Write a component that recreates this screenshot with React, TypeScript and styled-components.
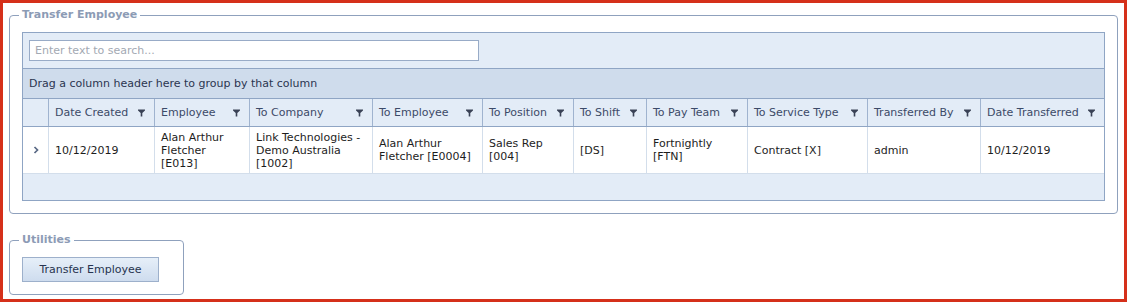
import React from 'react';
import styled, { createGlobalStyle } from 'styled-components';

const GlobalStyle = createGlobalStyle`
  html, body {
    margin: 0;
    padding: 0;
    background: #ffffff;
  }
  body {
    font-family: "DejaVu Sans", Verdana, sans-serif;
    font-size: 11px;
  }
`;

const Frame = styled.div`
  box-sizing: border-box;
  width: 1127px;
  height: 302px;
  border: 3px solid #d5301a;
  padding: 5px 6px 0 6px;
  background: #fff;
`;

const Group = styled.fieldset<{ $width?: string }>`
  box-sizing: border-box;
  width: ${(p) => p.$width || '100%'};
  margin: 0;
  padding: 10px 12px 12px 12px;
  border: 1px solid #8fa1bd;
  border-radius: 4px;
  & + & {
    margin-top: 19px;
  }
`;

const Caption = styled.legend`
  padding: 0 3px;
  margin-left: -3px;
  line-height: 14px;
  font-weight: bold;
  font-size: 11px;
  color: #8c9bb5;
`;

const Grid = styled.div`
  border: 1px solid #8fa5c4;
  background: #fff;
`;

const SearchPanel = styled.div`
  height: 35px;
  box-sizing: border-box;
  padding: 7px 6px;
  background: #e3ecf7;
`;

const SearchInput = styled.input`
  box-sizing: border-box;
  display: block;
  width: 450px;
  height: 21px;
  margin: 0;
  padding: 0 5px;
  border: 1px solid #98abc7;
  background: #fff;
  font: inherit;
  color: #222;
  outline: none;
  &::placeholder {
    color: #a3a9b3;
  }
`;

const GroupPanel = styled.div`
  height: 30px;
  box-sizing: border-box;
  border-top: 1px solid #8fa5c4;
  padding: 0 6px;
  display: flex;
  align-items: center;
  background: #cfdcec;
  color: #2b3550;
`;

const columns = '25px 106px 95px 123px 110px 91px 73px 101px 120px 113px 1fr';

const Row = styled.div<{ $head?: boolean }>`
  display: grid;
  grid-template-columns: ${columns};
  height: ${(p) => (p.$head ? '28px' : '48px')};
  box-sizing: border-box;
  border-top: 1px solid #8fa5c4;
  background: ${(p) => (p.$head ? '#e3ecf7' : '#fff')};
`;

const HeadCell = styled.div`
  display: flex;
  align-items: center;
  justify-content: space-between;
  box-sizing: border-box;
  padding: 0 9px 0 6px;
  border-left: 1px solid #9fb3cf;
  color: #3c4a68;
  white-space: nowrap;
  &:first-child {
    border-left: none;
  }
`;

const Cell = styled.div`
  display: flex;
  align-items: center;
  box-sizing: border-box;
  padding: 0 6px;
  border-left: 1px solid #d3deeb;
  border-bottom: 1px solid #d3deeb;
  color: #1d1d1d;
  line-height: 13px;
  &:first-child {
    border-left: none;
    justify-content: center;
  }
`;

const Footer = styled.div`
  height: 26px;
  background: #e3ecf7;
`;

const Button = styled.button`
  box-sizing: border-box;
  width: 137px;
  height: 25px;
  margin: 0;
  padding: 0;
  border: 1px solid #9db0cb;
  background: linear-gradient(#e6eff9, #cedcee);
  font: inherit;
  color: #27344f;
  cursor: pointer;
`;

const FilterIcon = () => (
  <svg width="7" height="8" viewBox="0 0 7 8">
    <path d="M0 0.5 H7 V1.5 L4.3 4 V7.5 H2.7 V4 L0 1.5 Z" fill="#3a4256" />
  </svg>
);

const Chevron = () => (
  <svg width="6" height="8" viewBox="0 0 6 8">
    <polyline points="1.5,1 4.5,4 1.5,7" fill="none" stroke="#586884" strokeWidth="1.7" />
  </svg>
);

const headers = [
  'Date Created',
  'Employee',
  'To Company',
  'To Employee',
  'To Position',
  'To Shift',
  'To Pay Team',
  'To Service Type',
  'Transferred By',
  'Date Transferred',
];

const record = [
  '10/12/2019',
  'Alan Arthur Fletcher [E013]',
  'Link Technologies - Demo Australia [1002]',
  'Alan Arthur Fletcher [E0004]',
  'Sales Rep [004]',
  '[DS]',
  'Fortnightly [FTN]',
  'Contract [X]',
  'admin',
  '10/12/2019',
];

export default function App() {
  return (
    <>
      <GlobalStyle />
      <Frame>
        <Group>
          <Caption>Transfer Employee</Caption>
          <Grid>
            <SearchPanel>
              <SearchInput placeholder="Enter text to search..." />
            </SearchPanel>
            <GroupPanel>Drag a column header here to group by that column</GroupPanel>
            <Row $head>
              <HeadCell />
              {headers.map((h) => (
                <HeadCell key={h}>
                  <span>{h}</span>
                  <FilterIcon />
                </HeadCell>
              ))}
            </Row>
            <Row>
              <Cell>
                <Chevron />
              </Cell>
              {record.map((v, i) => (
                <Cell key={i}>{v}</Cell>
              ))}
            </Row>
            <Footer />
          </Grid>
        </Group>
        <Group $width="175px">
          <Caption>Utilities</Caption>
          <Button>Transfer Employee</Button>
        </Group>
      </Frame>
    </>
  );
}
